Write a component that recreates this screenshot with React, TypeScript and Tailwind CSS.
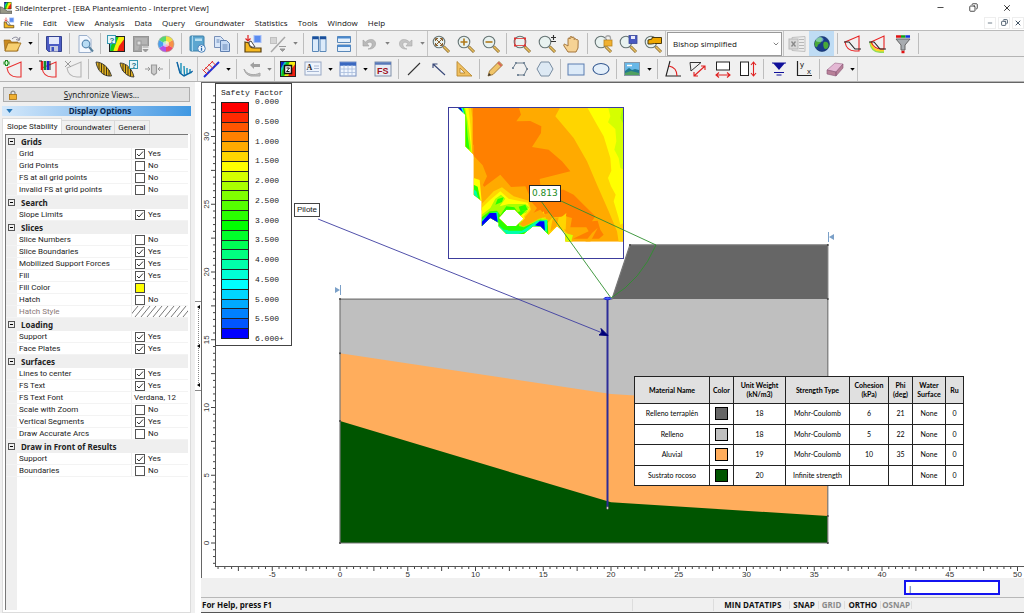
import React, { useState } from 'react';
import { Minus, X, Copy, ChevronDown } from 'lucide-react';

type Row =
  | { kind: 'group'; label: string }
  | { kind: 'check'; label: string; checked: boolean }
  | { kind: 'color'; label: string }
  | { kind: 'hatch'; label: string }
  | { kind: 'text'; label: string; value: string };

const rows: Row[] = [
  { kind: 'group', label: 'Grids' },
  { kind: 'check', label: 'Grid', checked: true },
  { kind: 'check', label: 'Grid Points', checked: false },
  { kind: 'check', label: 'FS at all grid points', checked: false },
  { kind: 'check', label: 'Invalid FS at grid points', checked: false },
  { kind: 'group', label: 'Search' },
  { kind: 'check', label: 'Slope Limits', checked: true },
  { kind: 'group', label: 'Slices' },
  { kind: 'check', label: 'Slice Numbers', checked: false },
  { kind: 'check', label: 'Slice Boundaries', checked: true },
  { kind: 'check', label: 'Mobilized Support Forces', checked: true },
  { kind: 'check', label: 'Fill', checked: true },
  { kind: 'color', label: 'Fill Color' },
  { kind: 'check', label: 'Hatch', checked: false },
  { kind: 'hatch', label: 'Hatch Style' },
  { kind: 'group', label: 'Loading' },
  { kind: 'check', label: 'Support', checked: true },
  { kind: 'check', label: 'Face Plates', checked: true },
  { kind: 'group', label: 'Surfaces' },
  { kind: 'check', label: 'Lines to center', checked: true },
  { kind: 'check', label: 'FS Text', checked: true },
  { kind: 'text', label: 'FS Text Font', value: 'Verdana, 12' },
  { kind: 'check', label: 'Scale with Zoom', checked: false },
  { kind: 'check', label: 'Vertical Segments', checked: true },
  { kind: 'check', label: 'Draw Accurate Arcs', checked: false },
  { kind: 'group', label: 'Draw in Front of Results' },
  { kind: 'check', label: 'Support', checked: true },
  { kind: 'check', label: 'Boundaries', checked: false },
];

const menus = ['File', 'Edit', 'View', 'Analysis', 'Data', 'Query', 'Groundwater', 'Statistics', 'Tools', 'Window', 'Help'];

const scaleColors = [
  '#ff0000', '#ff2a00', '#ff5500', '#ff8000', '#ffaa00', '#ffd500', '#ffff00', '#d5ff00',
  '#aaff00', '#80ff00', '#55ff00', '#2aff00', '#00ff00', '#00ff2a', '#00ff55', '#00ff80',
  '#00ffaa', '#00ffd5', '#00ffff', '#00d5ff', '#00aaff', '#0080ff', '#0055ff', '#0000ff',
];
const scaleLabels = ['0.000', '0.500', '1.000', '1.500', '2.000', '2.500', '3.000', '3.500', '4.000', '4.500', '5.000', '5.500', '6.000+'];

const materials = [
  { name: 'Relleno terraplén', color: '#666666', weight: 18, type: 'Mohr-Coulomb', c: '6', phi: '21' },
  { name: 'Relleno', color: '#bfbfbf', weight: 18, type: 'Mohr-Coulomb', c: '5', phi: '22' },
  { name: 'Aluvial', color: '#ffad5c', weight: 19, type: 'Mohr-Coulomb', c: '10', phi: '35' },
  { name: 'Sustrato rocoso', color: '#005500', weight: 20, type: 'Infinite strength', c: '', phi: '' },
];

// metres -> pixels inside the drawing area
const SCALE = 13.55;
const px = (u: number) => 125 + u * SCALE;
const py = (u: number) => 460 - u * SCALE;
const pts = (list: number[][]) => list.map(([a, b]) => `${px(a)},${py(b)}`).join(' ');

/* ---------- icons ---------- */

function Lens({ children }: { children?: React.ReactNode }) {
  return (
    <>
      <path d="M12.5 12.5l5.5 5.5" stroke="#8a6a30" strokeWidth="3" />
      <path d="M12.8 12.8l5 5" stroke="#e8c060" strokeWidth="1.6" />
      <circle cx="8" cy="8" r="5.8" fill="#e8f2f0" stroke="#667474" strokeWidth="1.1" />
      {children}
    </>
  );
}

function Contour({ x = 2, y = 2, s = 16 }: { x?: number; y?: number; s?: number }) {
  return (
    <svg x={x} y={y} width={s} height={s} viewBox="0 0 16 16">
      <rect width="16" height="16" fill="#0a22c8" />
      <path d="M5 0h11v16H0V9z" fill="#12c8c0" />
      <path d="M7 0h9v16H1l1-6z" fill="#18c818" />
      <path d="M10 0h6v16H4l2-6z" fill="#f6ee10" />
      <path d="M16 2v14H8l2-6z" fill="#ee2010" />
      <rect x=".5" y=".5" width="15" height="15" fill="none" stroke="#222" />
    </svg>
  );
}

const excavation = (
  <>
    <path d="M2 8l4 1c0 4 2 5 5 5h7v4H2z" fill="#f5b820" stroke="#5a4010" strokeWidth="1.2" />
    <path d="M6 8c0 4 3 6 6 5L8 7z" fill="#fff" stroke="#444" />
    <rect x="11" y="1.5" width="7" height="7" fill="#5b8cf0" stroke="#a8c0f8" />
    <path d="M5 1v6M2.5 4.5L5 7l2.5-2.5" stroke="#e02020" fill="none" strokeWidth="1.2" />
  </>
);

const icons: Record<string, React.ReactNode> = {
  open: (
    <>
      <path d="M1 6h6l1.5 2H15v9H2z" fill="#c98a20" stroke="#8a5a10" strokeWidth=".6" />
      <path d="M5 9h13l-4 8H2z" fill="#f8d070" stroke="#9a6a18" strokeWidth=".8" />
      <path d="M9 5c3-3 6-2 7 1m1-3l-.8 3.500L13 5.5" stroke="#889" fill="none" />
    </>
  ),
  save: (
    <>
      <path d="M2.5 2.5h15v15h-13l-2-2z" fill="#4c5cc4" stroke="#34428f" />
      <rect x="5" y="3" width="10" height="7" fill="#e4e8fa" />
      <rect x="6" y="12" width="8" height="5.5" fill="#c8cce0" />
      <rect x="7.5" y="13" width="2.5" height="4" fill="#3c50c0" />
    </>
  ),
  preview: (
    <>
      <path d="M4 1.5h8l4 4v13H4z" fill="#f4f8fe" stroke="#9cb0cc" />
      <circle cx="11" cy="10" r="3.8" fill="#b8dcf4" stroke="#5888b0" strokeWidth="1.2" />
      <path d="M14 13l4 4.5" stroke="#58809c" strokeWidth="2" />
    </>
  ),
  contourQuery: (
    <>
      <Contour x={3} y={2} s={16} />
      <rect x="1.5" y="1.5" width="8" height="8" fill="#e8f6fa" stroke="#3898b0" />
      <text x="3.5" y="8.5" fontSize="8" fontWeight="bold" fill="#187088" fontFamily="Liberation Sans">?</text>
    </>
  ),
  contourGray: (
    <>
      <rect x="2.5" y="2.5" width="15" height="15" fill="#a4a4a4" stroke="#949494" />
      <path d="M4 4h12v6H9l-2 6H4z" fill="#b4b4b4" />
      <rect x="6" y="7" width="4" height="4" fill="#ddd" stroke="#999" />
      <path d="M11 12h8v7h-8z" fill="#eee" />
      <path d="M11.5 13h6M12 15.5h5l-2.5 2.5z" fill="#999" stroke="#999" />
    </>
  ),
  wheel: (
    <>
      <path d="M10 10V2a8 8 0 0 1 7 4z" fill="#f0e040" />
      <path d="M10 10l7-4a8 8 0 0 1 0 8z" fill="#f89048" />
      <path d="M10 10l7 4a8 8 0 0 1-7 4z" fill="#f04868" />
      <path d="M10 10v8a8 8 0 0 1-7-4z" fill="#b050e8" />
      <path d="M10 10l-7 4a8 8 0 0 1 0-8z" fill="#48a0f0" />
      <path d="M10 10L3 6a8 8 0 0 1 7-4z" fill="#58d870" />
      <circle cx="10" cy="10" r="3" fill="#fff" opacity=".6" />
      <circle cx="10" cy="10" r="8" fill="none" stroke="#aaa" strokeWidth=".6" />
    </>
  ),
  book: (
    <>
      <rect x="3" y="2" width="14" height="15" rx="1" fill="#5ca6d0" stroke="#3c80a8" />
      <path d="M5.5 2v15" stroke="#a8d8f0" />
      <rect x="8" y="4.5" width="7" height="2.5" fill="#b8dff0" />
      <circle cx="14.5" cy="14.5" r="3.8" fill="#f0f8ff" stroke="#4880b8" />
      <path d="M14.5 13.8v3M14.5 12v1" stroke="#2060a8" strokeWidth="1.3" />
    </>
  ),
  copy: (
    <>
      <path d="M2.5 2.5h6l3 3v8h-9z" fill="#d8e6f8" stroke="#7890b8" />
      <path d="M8.5 6.5h6l3 3v8h-9z" fill="#c4d8f4" stroke="#6080b0" />
      <path d="M10.5 11h5M10.5 13h5M10.5 15h5M4.5 6h3M4.5 8h3" stroke="#6888b8" />
    </>
  ),
  excavation,
  ratio: (
    <>
      <path d="M3 18L17 3" stroke="#a8a8a8" strokeWidth="1.5" />
      <rect x="2.5" y="3.5" width="6" height="6" fill="#d4d4d4" stroke="#c0c0c0" />
      <path d="M11 12.5h7M12 15h5l-2.5 2.5z" fill="#999" stroke="#999" />
    </>
  ),
  tileV: (
    <>
      <path d="M3.5 2.5h6v15h-6zM11 2.5h6v15h-6z" fill="#dcebfa" stroke="#5a88b8" />
      <path d="M3.5 4h6M11 4h6" stroke="#1c4f9c" strokeWidth="2.5" />
    </>
  ),
  tileH: (
    <>
      <path d="M3.5 2.5h13v6h-13zM3.5 11h13v6.5h-13z" fill="#e4f0fc" stroke="#5a88b8" />
      <path d="M3.5 3.5h13M3.5 12h13" stroke="#4a88cc" strokeWidth="2" />
    </>
  ),
  undo: <path d="M3 6v6h6l-2-2.5c3-2.5 6-1 5 2-.5 2-2 3-4 3.5 5 .5 8-2.5 7.500-6C15 5 9.500 4 5.500 8z" fill="#bababa" stroke="#a0a0a0" strokeWidth=".6" />,
  redo: <path d="M17 6v6h-6l2-2.5c-3-2.5-6-1-5 2 .5 2 2 3 4 3.5-5 .5-8-2.5-7.500-6C5 5 10.500 4 14.500 8z" fill="#c4c4c4" stroke="#a8a8a8" strokeWidth=".6" />,
  zoomAll: (
    <Lens>
      <path d="M5 5l6 6M11 5l-6 6M4.5 7V4.5H7M9 4.5h2.5V7M4.5 9v2.5H7M9 11.5h2.5V9" stroke="#8a6030" fill="none" />
    </Lens>
  ),
  zoomIn: <Lens><path d="M8 4.5v7M4.5 8h7" stroke="#b07818" strokeWidth="1.6" /></Lens>,
  zoomOut: <Lens><path d="M4.5 8h7" stroke="#b07818" strokeWidth="1.6" /></Lens>,
  zoomWindow: (
    <Lens>
      <rect x="3" y="4.5" width="10" height="7" fill="none" stroke="#e03030" strokeWidth=".8" />
      <path d="M2 3.5h2v2H2zM12 3.5h2v2h-2zM2 10.5h2v2H2zM12 10.5h2v2h-2z" fill="#e03030" />
    </Lens>
  ),
  zoomPM: <Lens><path d="M16.5 1v5M14 3.5h5M14 7.5h5" stroke="#333" strokeWidth="1.1" /></Lens>,
  pan: (
    <path
      d="M6 18l-4-6c-1-1.500.5-2.500 1.500-1.500L6 12V5c0-1.500 2-1.500 2 0V3.500c0-1.500 2-1.500 2 0V4c0-1.500 2-1.500 2.200 0v1.500c0-1.200 2-1.200 2 .3 1-.8 2 0 2 1L16 14l-2 4z"
      fill="#f6d294"
      stroke="#9a6a30"
      strokeWidth=".9"
    />
  ),
  zoomLock: (
    <Lens>
      <rect x="11" y="6" width="8" height="6" fill="#f0b030" stroke="#b88420" strokeWidth=".8" />
      <path d="M12.5 6V4c0-3 5-3 5 0v2" fill="none" stroke="#a8a8a8" strokeWidth="1.3" />
    </Lens>
  ),
  zoomSave: (
    <Lens>
      <rect x="11" y="1.5" width="8" height="8" fill="#4858c0" stroke="#384898" strokeWidth=".8" />
      <path d="M13 2h4v3h-4z" fill="#e8e8fa" />
    </Lens>
  ),
  zoomShape: <Lens><path d="M5 10V6l4-1V3.5h9.500v6h-7L8 10z" fill="#f0a800" stroke="#4a3a10" /></Lens>,
  excel: (
    <>
      <path d="M5 3.5l13-1v15l-13-1z" fill="#ececec" stroke="#c0c0c0" />
      <path d="M12 5.5h5M12 8.5h5M12 11.5h5M12 14.5h5" stroke="#b8b8b8" />
      <rect x="2" y="5" width="9" height="10" fill="#d8d8d8" stroke="#b8b8b8" />
      <path d="M4.5 7.5l4 5M8.5 7.5l-4 5" stroke="#888" strokeWidth="1.3" />
    </>
  ),
  globe: (
    <>
      <circle cx="10" cy="10" r="7.5" fill="#1a3c88" stroke="#123060" strokeWidth=".6" />
      <path d="M6 4c3-2 5 0 4 2s-1 3-3 4-1 4-3 3-2-6 2-9zM12 8c3-1 5 1 4.500 4S13 16 12 14s-1-5 0-6z" fill="#48a838" />
      <ellipse cx="7.5" cy="5.5" rx="4" ry="2.5" fill="#b8f0ff" opacity=".5" />
    </>
  ),
  surfaceMin: (
    <>
      <path d="M2 8l14-6v15h-4C7 17 3 14 2 8z" fill="none" stroke="#e82020" strokeWidth="1.1" />
      <path d="M1 8h5l6 7h6" fill="none" stroke="#222" strokeWidth="1.1" />
    </>
  ),
  surfaceAll: (
    <>
      <path d="M2 8c1 7 5 10 10 10h4" fill="none" stroke="#8fdc60" strokeWidth="1.8" />
      <path d="M3 8c1 6 4 8.500 9 8.500h4" fill="none" stroke="#f8d820" strokeWidth="1.800" />
      <path d="M3 8l13-6v13h-3C8 15 5 12 3 8z" fill="none" stroke="#e82020" strokeWidth="1.1" />
      <path d="M1 8h5l6 7h6" fill="none" stroke="#222" strokeWidth="1.1" />
    </>
  ),
  filter: (
    <>
      <path d="M3 2.5h5" stroke="#e01010" strokeWidth="2.5" />
      <path d="M8 2.5h4.5" stroke="#10a010" strokeWidth="2.5" />
      <path d="M12.5 2.5h4.5" stroke="#1030e0" strokeWidth="2.5" />
      <path d="M3 5h14l-5 6v5H8v-5z" fill="#a8acb0" stroke="#666" />
      <path d="M8.500 18h3" stroke="#e01010" strokeWidth="2.5" />
    </>
  ),
  surfaceAdd: (
    <>
      <path d="M4 9l14-6v15h-4C9 18 5 15 4 9z" fill="none" stroke="#e83030" strokeWidth="1.1" />
      <path d="M3.5 1v6M.5 4h6" stroke="#208a20" strokeWidth="3" />
      <path d="M3.5 2v4M1.5 4h4" stroke="#d8ffd8" />
    </>
  ),
  surfaceBars: (
    <>
      <path d="M4 9l14-6v15h-4C9 18 5 15 4 9z" fill="none" stroke="#e83030" strokeWidth="1.1" />
      <path d="M4 2v9" stroke="#e02020" strokeWidth="2.5" />
      <path d="M7 2v9" stroke="#108a30" strokeWidth="2.5" />
      <path d="M10 2v9" stroke="#2020c8" strokeWidth="2.5" />
      <path d="M1 2h3M12 2v9" stroke="#222" />
    </>
  ),
  surfaceOff: (
    <>
      <path d="M4 9l14-6v15h-4C9 18 5 15 4 9z" fill="none" stroke="#b4b4b4" strokeWidth="1.1" />
      <path d="M2 2l6 6M8 2L2 8" stroke="#999" />
    </>
  ),
  slice: (
    <>
      <path d="M2 3c6 0 13 5 15.5 14C9 18 3 11 2 3z" fill="#e0b020" stroke="#333" strokeWidth=".9" />
      <path d="M5 3.5v7M7.5 4.5v9M10 6v10M12.5 8v9M15 11v6" stroke="#332a10" strokeWidth=".9" />
    </>
  ),
  sliceQuery: (
    <>
      <path d="M1 4c6 0 12 5 14 14C8 18 2 12 1 4z" fill="#e0b020" stroke="#333" strokeWidth=".9" />
      <path d="M4 5v7M6.5 6v8M9 8v8M11.5 10v7" stroke="#332a10" strokeWidth=".9" />
      <rect x="10.5" y="1.5" width="8" height="8" fill="#e8f6fa" stroke="#3898b0" />
      <text x="12.5" y="8.5" fontSize="8" fontWeight="bold" fill="#187088" fontFamily="Liberation Sans">?</text>
    </>
  ),
  sliceForces: (
    <>
      <path d="M7.500 6h5v8l-2.500 2-2.500-2z" fill="#ccc" stroke="#999" strokeWidth="1.2" />
      <path d="M1 10h5M4 8l2 2-2 2M19 10h-5M16 8l-2 2 2 2" fill="none" stroke="#999" />
    </>
  ),
  fan: (
    <>
      <path d="M2 3l3 11 4 3 8-4M6 4v11M9 7l.5 10M12 9v7M15 10v4" fill="none" stroke="#1890b8" strokeWidth="1.4" />
      <path d="M2 3l3 11 4 3 9-5" fill="none" stroke="#1858a0" />
    </>
  ),
  pile: (
    <>
      <path d="M3 18L18 3" stroke="#2030d8" strokeWidth="2" />
      <path d="M2 12L12 2M1.500 10.500l5 5M4.500 8l4.500 4.500M7.500 5l4.500 4.500M11 2.500l4 4" stroke="#e03030" strokeWidth="1" />
    </>
  ),
  bounce: (
    <>
      <path d="M2 10c3 6 10 7 16 4v3H9c-4-1-6-3-7-7z" fill="#c0c0c0" stroke="#a8a8a8" />
      <path d="M8 6l4-3v2h6v3h-6v2z" fill="#a0a0a0" />
    </>
  ),
  contourBox: (
    <>
      <Contour x={2} y={2} s={16} />
      <rect x="6.5" y="6.5" width="7" height="8" fill="#fff" stroke="#111" strokeWidth="1.5" />
      <path d="M8.5 9h3l-3 3.5h3" stroke="#111" fill="none" />
    </>
  ),
  textBox: (
    <>
      <rect x="2" y="3" width="16" height="13" fill="#eef4fc" stroke="#98a8c4" />
      <text x="3.5" y="10.5" fontSize="8" fontWeight="bold" fill="#222" fontFamily="Liberation Serif">A</text>
      <path d="M11 7h5M11 9.5h5M4 12.5h12" stroke="#a8b8d4" />
    </>
  ),
  grid: (
    <>
      <rect x="2" y="3" width="16" height="14" fill="#f0f6fe" stroke="#7890c0" />
      <path d="M2 5h16" stroke="#3a68c0" strokeWidth="3.5" />
      <path d="M2 10h16M2 13.5h16M6 6v11M10 6v11M14 6v11" stroke="#a8bcdc" strokeWidth=".8" />
    </>
  ),
  fs: (
    <>
      <rect x="2" y="3" width="16" height="14" fill="#e8ecf4" stroke="#8090a8" />
      <path d="M2 4.5h16" stroke="#5878b8" strokeWidth="2.5" />
      <text x="4" y="15" fontSize="9" fontWeight="bold" fill="#a01020" fontFamily="Liberation Sans">FS</text>
    </>
  ),
  line: <path d="M4 16L16 4" stroke="#333" strokeWidth="1.1" />,
  arrow: <path d="M16 16L4 5M4 9V5h4.500" stroke="#384878" strokeWidth="1.1" fill="none" />,
  triangle: <path d="M3 2.5L18 17H3zM6 9v5h5z" fill="#f0c060" fillRule="evenodd" stroke="#b88830" strokeWidth=".9" />,
  pencil: (
    <>
      <path d="M3 17l1.5-5L14 2.5l3.5 3.5L8 15.5z" fill="#f0c468" stroke="#9a7030" strokeWidth=".9" />
      <path d="M3 17l1-3 2 2z" fill="#333" />
      <path d="M13 3.5l3.5 3.5" stroke="#d86858" strokeWidth="2" />
    </>
  ),
  polyline: (
    <>
      <path d="M3 9l3-5h8l3 6-3 6H8" fill="none" stroke="#6a7c8c" />
      <path d="M2 8h2v2H2zM5 3h2v2H5zM13 3h2v2h-2zM16 9h2v2h-2zM13 15h2v2h-2zM7 15h2v2H7z" fill="#789" />
    </>
  ),
  polygon: <path d="M6 3h8l4 7-4 7H6l-4-7z" fill="#dde9f4" stroke="#788ca0" />,
  rect: <rect x="2" y="5" width="16" height="11" fill="#dceaf8" stroke="#5a7cb0" />,
  ellipse: <ellipse cx="10" cy="10" rx="8" ry="5.5" fill="#e4effa" stroke="#345890" strokeWidth="1.1" />,
  image: (
    <>
      <rect x="2.5" y="3.5" width="15" height="13" fill="#68b8e8" stroke="#8898a8" />
      <path d="M3 12l4-3 3 2 3-1 4 1v5H3z" fill="#207890" />
      <path d="M3 14l6-2 8 2v2H3z" fill="#50a060" />
      <path d="M5 6.5h5" stroke="#fff" strokeWidth="1.5" />
    </>
  ),
  angle: (
    <>
      <path d="M7 2L3 17h15" fill="none" stroke="#222" strokeWidth="1.1" />
      <path d="M6 7c5 1 8 4 8 10" fill="none" stroke="#e02020" strokeWidth="1.1" />
    </>
  ),
  dimDiag: (
    <>
      <path d="M2 3.5h11L3 12z" fill="none" stroke="#333" />
      <path d="M6 17L17 7M6 13v4h4M13 7h4v4" fill="none" stroke="#e02020" strokeWidth="1.1" />
    </>
  ),
  dimH: (
    <>
      <rect x="3.5" y="3" width="13" height="8" fill="#fff" stroke="#222" />
      <path d="M3 16h14M6 13.5L3 16l3 2.5M14 13.5l3 2.5-3 2.5" fill="none" stroke="#e02020" strokeWidth="1.1" />
    </>
  ),
  dimV: (
    <>
      <rect x="2.5" y="3" width="8" height="13.5" fill="#fff" stroke="#222" />
      <path d="M15.5 3v14M13 6l2.5-3L18 6M13 14l2.5 3 2.5-3" fill="none" stroke="#e02020" strokeWidth="1.1" />
    </>
  ),
  water: (
    <>
      <path d="M4 4h12l-6 7z" fill="#10109a" />
      <path d="M3 4h14M5 13.5h10M7.5 16h5" stroke="#10109a" strokeWidth="1.2" />
    </>
  ),
  axes: (
    <>
      <path d="M3.5 2v14.5H18" fill="none" stroke="#222" strokeWidth="1.2" />
      <text x="6" y="8" fontSize="8" fill="#222" fontFamily="Liberation Sans">y</text>
      <text x="13" y="14.5" fontSize="8" fill="#222" fontFamily="Liberation Sans">x</text>
    </>
  ),
  eraser: (
    <>
      <path d="M2 11l8-7 8 1-7 8z" fill="#e4b8d4" stroke="#9a6888" strokeWidth=".6" />
      <path d="M2 11l9 2v4l-9-2zM11 13l7-8v4l-7 8z" fill="#b88098" stroke="#8a5878" strokeWidth=".6" />
    </>
  ),
};

function Icon({ name }: { name: string }) {
  return (
    <svg viewBox="0 0 20 20" className="size-5" aria-hidden="true">
      {icons[name]}
    </svg>
  );
}

// "|" is a group separator, "/" the edge of a docked bar, "v" and "w" drop-down arrows (w is greyed)
const bar1a = ['open', 'v', '|', 'save', '|', 'preview', '|', 'contourQuery', 'contourGray', 'wheel', '|', 'book', 'copy', '|', 'excavation', 'ratio', 'w', '|', 'tileV', 'tileH', '/', 'undo', 'w', 'redo', 'w', '/', 'zoomAll', 'zoomIn', 'zoomOut', '|', 'zoomWindow', 'zoomPM', 'pan', '|', 'zoomLock', 'zoomSave', 'zoomShape', '/'];
const bar1b = ['/', 'excel', 'globe', '|', 'surfaceMin', 'surfaceAll', 'filter', '|'];
const bar2 = ['surfaceAdd', 'v', 'surfaceBars', 'surfaceOff', '|', 'slice', 'sliceQuery', 'sliceForces', '|', 'fan', '/', 'pile', 'v', '|', 'bounce', 'w', '/', 'contourBox', 'textBox', 'v', 'grid', 'v', 'fs', '|', 'line', 'arrow', 'triangle', '|', 'pencil', 'polyline', 'polygon', '|', 'rect', 'ellipse', '|', 'image', 'v', '|', 'angle', 'dimDiag', 'dimH', 'dimV', '|', 'water', 'axes', '|', 'eraser', 'v', '/'];

function Bar({ items }: { items: string[] }) {
  return (
    <>
      {items.map((item, i) => {
        if (item === '|') {
          return <span key={i} className="flex w-1.5 shrink-0 justify-center self-stretch py-0.5"><span className="w-px bg-[#bdbdbd]" /></span>;
        }
        if (item === '/') return <span key={i} className="w-px shrink-0 self-stretch bg-[#c4c4c4]" />;
        if (item === 'v' || item === 'w') {
          return (
            <button key={i} aria-label="More" className="flex w-2.5 shrink-0 justify-center">
              <svg viewBox="0 0 6 4" className={item === 'v' ? 'h-[3px] w-[5px] fill-black' : 'h-[3px] w-[5px] fill-[#808080]'}>
                <path d="M0 0h6L3 3.5z" />
              </svg>
            </button>
          );
        }
        return (
          <button
            key={i}
            aria-label={item}
            className={`flex w-[25px] shrink-0 items-center justify-center self-stretch ${item === 'globe' ? 'bg-[#bfdcf4]' : ''}`}
          >
            <Icon name={item} />
          </button>
        );
      })}
    </>
  );
}

/* ---------- side panel ---------- */

function PropertyRow({ row, id }: { row: Row; id: string }) {
  const [on, setOn] = useState(row.kind === 'check' ? row.checked : false);

  if (row.kind === 'group') {
    return (
      <div className="flex h-[13px] items-center bg-[#efefef] font-['Noto_Sans',sans-serif] font-bold">
        <button aria-label={`Collapse ${row.label}`} className="ml-0.5 mr-1.5 flex size-[7px] items-center justify-center border border-[#555]">
          <span className="h-px w-[3px] bg-black" />
        </button>
        {row.label}
      </div>
    );
  }

  return (
    <div className="flex h-3 items-stretch border-b border-[#f3f3f3] pl-[11px]">
      <label htmlFor={id} className={`flex w-[115px] items-center border-r border-[#efefef] bg-white pl-0.5 ${row.kind === 'hatch' ? 'text-[#8a7878]' : ''}`}>
        {row.label}
      </label>
      <div className="flex flex-1 items-center bg-white">
        {row.kind === 'check' && (
          <>
            <span className="relative ml-[3px] flex">
              <input
                id={id}
                type="checkbox"
                checked={on}
                onChange={(e) => setOn(e.target.checked)}
                className="peer size-2.5 appearance-none border border-[#555] bg-white"
              />
              <svg viewBox="0 0 10 10" className="pointer-events-none absolute inset-0 hidden size-2.5 peer-checked:block">
                <path d="M2 5l2 2 4-4.5" fill="none" stroke="#333" />
              </svg>
            </span>
            <span className="ml-[3px]">{on ? 'Yes' : 'No'}</span>
          </>
        )}
        {row.kind === 'color' && <button id={id} aria-label="Fill Color" className="ml-[3px] size-2.5 border border-[#444] bg-[#ffff00]" />}
        {row.kind === 'text' && <span id={id} className="ml-0.5">{row.value}</span>}
        {row.kind === 'hatch' && (
          <svg id={id} className="h-full w-full">
            {Array.from({ length: 10 }, (_, i) => (
              <path key={i} d={`M${i * 6 - 3} 11l9-11`} stroke="#555" strokeWidth=".8" />
            ))}
          </svg>
        )}
      </div>
    </div>
  );
}

function SidePanel() {
  const [tab, setTab] = useState('Slope Stability');
  return (
    <aside className="flex w-[195px] shrink-0 flex-col pl-0.5 pr-1 pt-[5px] font-['Roboto','Noto_Sans',sans-serif] text-[8px] leading-none text-[#222]">
      <button className="mx-px flex h-[15px] shrink-0 items-center border border-[#adadad] bg-[#e1e1e1] px-1 font-['Noto_Sans',sans-serif]">
        <svg viewBox="0 0 10 10" className="size-2.5">
          <path d="M3 5V3c0-2.5 4-2.5 4 0v2" fill="none" stroke="#888" strokeWidth="1.2" />
          <rect x="1.5" y="4.5" width="7" height="5" fill="#f0b030" stroke="#a87010" strokeWidth=".8" />
        </svg>
        <span className="flex-1"><u>S</u>ynchronize Views...</span>
      </button>
      <div className="mt-1 flex h-2.5 shrink-0 items-center bg-gradient-to-r from-[#d4e8fa] to-[#3f98e2] px-1 font-['Noto_Sans',sans-serif]">
        <svg viewBox="0 0 8 5" className="h-1 w-[7px]"><path d="M0 0h8L4 5z" fill="#2878b8" /></svg>
        <span className="flex-1 text-center font-bold text-[#0a2850]">Display Options</span>
      </div>
      <div role="tablist" className="mt-0.5 flex h-4 shrink-0 items-end">
        {['Slope Stability', 'Groundwater', 'General'].map((name) => (
          <button
            key={name}
            role="tab"
            aria-selected={tab === name}
            onClick={() => setTab(name)}
            className={tab === name ? 'h-4 border border-b-0 border-[#dcdcdc] bg-white px-1' : 'h-3.5 border border-b-0 border-l-0 border-[#d9d9d9] bg-[#f0f0f0] px-[3px]'}
          >
            {name}
          </button>
        ))}
      </div>
      <div className="flex-1 border border-t-0 border-[#dcdcdc] bg-white px-0.5 pb-0.5">
        <div className="h-full border-l border-t border-[#777] bg-[linear-gradient(to_right,#efefef_11px,#fff_11px)]">
          {rows.map((row, i) => (
            <PropertyRow key={i} row={row} id={`prop-${i}`} />
          ))}
        </div>
      </div>
    </aside>
  );
}

/* ---------- drawing ---------- */

function tickLength(k: number, long: number) {
  if (k % 10 === 0) return long;
  return k % 5 === 0 ? 4 : 2;
}

function VerticalRuler() {
  const ticks = Array.from({ length: 70 }, (_, i) => i - 3);
  return (
    <svg className="h-full w-[13px] shrink-0 bg-white">
      {ticks.map((k) => {
        const y = py(k / 2);
        return (
          <g key={k}>
            <path d={`M13 ${y}h-${tickLength(k, 4)}`} stroke="#444" />
            {k % 10 === 0 && (
              <text transform={`translate(7 ${y}) rotate(-90)`} textAnchor="middle" fontSize="8" fill="#333">{k / 2}</text>
            )}
          </g>
        );
      })}
    </svg>
  );
}

function HorizontalRuler() {
  const ticks = Array.from({ length: 119 }, (_, i) => i - 18);
  return (
    <svg className="h-3 w-full shrink-0 bg-white">
      <path d="M13 .5h4000" stroke="#555" />
      {ticks.map((k) => {
        const x = px(k / 2) + 13;
        return (
          <g key={k}>
            <path d={`M${x} 1v${tickLength(k, 4)}`} stroke="#444" />
            {k % 10 === 0 && (
              <text x={x} y="11" textAnchor="middle" fontSize="8" fill="#333">{k / 2}</text>
            )}
          </g>
        );
      })}
    </svg>
  );
}

// contours of the slip-centre grid
function SafetyMap() {
  return (
    <svg x="234" y="24" width="175" height="151" viewBox="26 37 525 453">
      <clipPath id="grid-area">
        <path
          clipRule="evenodd"
          d="M50 37H551V441H375V415L350 395L325 420L300 395H278L250 418H198L175 395V384L150 370L124 395V320L100 300V180L75 155V60zM198 345H224L250 372L228 394H200L175 370z"
        />
      </clipPath>
      <g clipPath="url(#grid-area)">
        <rect x="26" y="37" width="525" height="453" fill="#ffaa00" />
        <path d="M97 37H235L242 60L228 80L270 79L303 95L302 115L275 157L325 165L365 200L390 230L298 253L302 285H370L400 300L430 330L465 365L455 380L472 378L480 405L490 420L476 432H398L445 410L438 398H390L395 370L375 365L340 368L325 355L275 372L248 395V380L262 350L270 310L255 275L212 277L180 240L122 284L140 245L127 212L97 180z" fill="#ff8000" />
        <path d="M472 400L450 441H435L455 415z" fill="#ffaa00" />
        <path d="M360 37H551V441H535L530 410L505 350L470 270L440 200L400 130L345 65z" fill="#ffd500" />
        <path d="M440 37H551V385L540 390L535 370L520 320L526 300L512 275L503 250L513 228L510 190L490 125L470 90z" fill="#ffff00" />
        <path d="M503 37H551V225L540 220L535 190L522 165L528 140L525 103L503 83L510 65z" fill="#d5ff00" />
        <path d="M545 45L551 40V92L540 70z" fill="#aaff00" />

        <path d="M75 37H97V182L108 215L122 240V262L140 290L180 265L215 300L262 310L290 340L275 362L250 385H175L100 330V150L75 158z" fill="#ffaa00" />
        <path d="M68 37H92L96 70V178L75 160z" fill="#ffd500" />
        <path d="M60 37H84L90 90L95 178L75 160z" fill="#ffff00" />
        <path d="M54 37H74L82 80L90 140L94 176H72z" fill="#aaff00" />
        <path d="M48 37H70L77 65L82 125L88 165L75 160V62z" fill="#2aff00" />
        <path d="M48 37H66L73 62z" fill="#00ffff" />
        <path d="M48 37H61L68 54z" fill="#0000ff" />
        <path d="M100 250L118 256L124 320L100 302z" fill="#ffff00" />
        <path d="M100 270L112 276L120 315L100 302z" fill="#2aff00" />
        <path d="M100 284L108 290L114 312L100 300z" fill="#00ffaa" />

        <path d="M124 328L160 290L185 278L220 305L265 318L272 345L250 372L285 372L310 350L325 400L378 355L372 405L398 441H320L260 425H180L124 395z" fill="#ffd500" />
        <path d="M124 340L150 315L180 290L205 312L262 324L268 342L250 365L262 385L305 362L322 400L325 420H170L124 395z" fill="#ffff00" />
        <path d="M124 360L150 340L165 312L182 300L195 312L178 335L205 328L255 328L266 338L258 354L235 362L252 390L300 370L322 374V420H170L124 400z" fill="#aaff00" />
        <path d="M124 368L148 350L170 348L180 362L198 335L222 338L232 352L258 345L240 365L236 394L250 398L300 375L322 378L325 420H170L124 400z" fill="#2aff00" />
        <path d="M165 330L172 313L190 308L185 322zM235 336L255 330L262 345L240 350z" fill="#2aff00" />
        <path d="M124 376L150 355L172 352L174 390L190 405H250L290 378L320 376V412L300 400L255 412L210 425L170 400L150 380L124 400z" fill="#00ffaa" />
        <path d="M185 398L205 408H245L268 394L250 405L230 398H200z" fill="#2aff00" />
        <path d="M124 382L148 355H168L173 388L152 372L124 400zM284 392L298 380H312L314 410L300 396z" fill="#0000ff" />
        <path d="M238 388L262 362L300 345L318 366L296 372L262 390L248 396z" fill="#ffaa00" />
        <path d="M322 385L335 370L378 365L376 405L350 394L325 420z" fill="#ffd500" />
        <path d="M337 372L355 368L350 394L330 410z" fill="#ffaa00" />
        <path d="M375 415L398 422L392 441H375z" fill="#d5ff00" />
      </g>
    </svg>
  );
}

function Scene() {
  return (
    <svg className="absolute inset-0 h-full w-full">
      <path d="M.5 0v4000" stroke="#555" />
      <SafetyMap />
      <rect x="233.5" y="24.5" width="175" height="151" fill="none" stroke="#3c3c9c" />

      <polygon points={pts([[0, 18], [36, 18], [36, 0], [0, 0]])} fill="#bfbfbf" />
      <polygon points={pts([[20.07, 18], [21.4, 22], [36, 22], [36, 18]])} fill="#666666" />
      <polygon points={pts([[0, 14], [20, 11], [36, 10], [36, 0], [0, 0]])} fill="#ffad5c" />
      <polygon points={pts([[0, 9], [20, 3], [36, 2], [36, 0], [0, 0]])} fill="#005500" />
      <polygon points={pts([[0, 18], [20.07, 18], [21.4, 22], [36, 22], [36, 0], [0, 0]])} fill="none" stroke="#777" strokeWidth="1.2" />
      {[[0, 18], [0, 14], [0, 9], [0, 0], [36, 0], [36, 2], [36, 18], [36, 22], [21.4, 22]].map(([a, b], i) => (
        <circle key={i} cx={px(a)} cy={py(b)} r="1" fill="#444" />
      ))}

      {/* critical surface */}
      <path d="M326 118L396 215M346 118L441 162M396 215Q426 197 441 162" fill="none" stroke="#2f8f2f" strokeWidth=".9" />

      {/* slope limits */}
      <path d="M125.5 202v10M613.5 149v10" stroke="#7ba0c8" />
      <path d="M120 204v6l5-3zM619 151v6l-5-3z" fill="#7ba0c8" />

      {/* pile and its callout */}
      <path d="M392.5 215v209" stroke="#2c2c98" strokeWidth="2" />
      <ellipse cx="392.5" cy="215.5" rx="3.5" ry="1.2" fill="#4060ff" stroke="#2c2cd0" />
      <circle cx="392.5" cy="425" r="1.2" fill="#fff" stroke="#555" />
      <path d="M103 136L390 251" stroke="#3c3ca0" strokeWidth=".9" />
      <path d="M393 252.5l-9-.5 3-2.5-1-4z" fill="#00007a" stroke="#00007a" />
    </svg>
  );
}

function Legend() {
  return (
    <div className="absolute left-0 top-0 w-[77px] border border-[#444] bg-white px-[5px] pb-0.5 pt-[5px] font-['Liberation_Mono',monospace] text-[8px] leading-[8px] text-[#222]">
      <div>Safety Factor</div>
      <div className="mt-px flex gap-1.5">
        <div className="mb-1 mt-1 flex h-[237px] w-7 flex-col border border-b-0 border-[#222]">
          {scaleColors.map((color) => (
            <span key={color} className="flex-1 border-b border-[#222]" style={{ backgroundColor: color }} />
          ))}
        </div>
        <div className="flex flex-col justify-between">
          {scaleLabels.map((label) => (
            <span key={label}>{label}</span>
          ))}
        </div>
      </div>
    </div>
  );
}

function MaterialTable() {
  const cell = 'border border-[#222] p-0';
  return (
    <table className="absolute left-[419px] top-[293px] h-[110px] w-[329px] table-fixed border-collapse bg-white text-center font-['Lato','Noto_Sans',sans-serif] text-[7px] leading-[9px] text-black">
      <colgroup>
        <col className="w-[75px]" />
        <col className="w-6" />
        <col className="w-[52px]" />
        <col className="w-16" />
        <col className="w-[39px]" />
        <col className="w-6" />
        <col className="w-[33px]" />
        <col className="w-[18px]" />
      </colgroup>
      <thead>
        <tr className="h-[27px] bg-[#e0e0e0]">
          <th className={cell}>Material Name</th>
          <th className={cell}>Color</th>
          <th className={cell}>Unit Weight<br />(kN/m3)</th>
          <th className={cell}>Strength Type</th>
          <th className={cell}>Cohesion<br />(kPa)</th>
          <th className={cell}>Phi<br />(deg)</th>
          <th className={cell}>Water<br />Surface</th>
          <th className={cell}>Ru</th>
        </tr>
      </thead>
      <tbody>
        {materials.map((m) => (
          <tr key={m.name}>
            <td className={cell}>{m.name}</td>
            <td className={cell}><span className="mx-auto block size-[13px] border border-black" style={{ backgroundColor: m.color }} /></td>
            <td className={cell}>{m.weight}</td>
            <td className={cell}>{m.type}</td>
            <td className={cell}>{m.c}</td>
            <td className={cell}>{m.phi}</td>
            <td className={cell}>None</td>
            <td className={cell}>0</td>
          </tr>
        ))}
      </tbody>
    </table>
  );
}

function Splitter() {
  return (
    <div className="flex w-1.5 shrink-0 items-start bg-white pt-[219px]">
      <div className="flex h-[90px] w-full flex-col items-center justify-between border-y border-[#888] py-[3px]">
        {[0, 1, 2].map((n) => (
          <React.Fragment key={n}>
            {n > 0 && <span className="w-px flex-1 border-l border-dotted border-[#888]" />}
            <svg viewBox="0 0 3 4" className="h-1 w-[3px]"><path d="M3 0v4L0 2z" /></svg>
          </React.Fragment>
        ))}
      </div>
    </div>
  );
}

export default function App() {
  const [method, setMethod] = useState('Bishop simplified');
  const [command, setCommand] = useState('');

  return (
    <div className="flex h-screen flex-col overflow-hidden bg-[#f0f0f0] font-['Open_Sans','Noto_Sans',sans-serif] text-[8px] leading-none text-[#111]">
      <header className="shrink-0 bg-white">
        <div className="flex h-[15px] items-center">
          <svg viewBox="0 0 20 20" className="mr-[3px] size-3"><Contour x={7} y={0} s={12} /><path d="M0 8l4 1 8 6h8v4H0z" fill="#998" stroke="#444" /></svg>
          <h1>SlideInterpret - [EBA Planteamiento - Interpret View]</h1>
          <div className="ml-auto flex items-center gap-6 pr-3">
            <button aria-label="Minimize"><Minus size={9} /></button>
            <button aria-label="Restore"><Copy size={9} className="-scale-x-100" /></button>
            <button aria-label="Close"><X size={10} /></button>
          </div>
        </div>
        <nav className="flex h-[15px] items-center gap-2.5 pl-[3px]">
          <svg viewBox="0 0 20 20" className="-mr-[5px] size-3">{excavation}</svg>
          {menus.map((m) => (
            <button key={m}>{m}</button>
          ))}
          <div className="ml-auto flex gap-0.5 text-[#456]">
            <button aria-label="Minimize view" className="flex size-3 items-center justify-center border border-[#eee]"><Minus size={6} strokeWidth={3} /></button>
            <button aria-label="Restore view" className="flex size-3 items-center justify-center border border-[#eee]"><Copy size={7} strokeWidth={3} className="-scale-x-100" /></button>
            <button aria-label="Close view" className="flex size-3 items-center justify-center border border-[#eee]"><X size={8} strokeWidth={3} /></button>
          </div>
        </nav>
      </header>

      <div className="flex h-[26px] shrink-0 items-center border-t border-[#bbb]">
        <Bar items={bar1a} />
        <div className="relative mx-px h-6 w-[115px] shrink-0">
          <select
            aria-label="Analysis method"
            value={method}
            onChange={(e) => setMethod(e.target.value)}
            className="h-full w-full appearance-none border border-[#999] bg-white pl-[5px] font-medium"
          >
            <option>Bishop simplified</option>
            <option>Janbu simplified</option>
            <option>Spencer</option>
          </select>
          <ChevronDown size={8} className="pointer-events-none absolute right-0.5 top-2 text-[#444]" />
        </div>
        <Bar items={bar1b} />
      </div>
      <div className="flex h-[26px] shrink-0 items-center border-y border-[#b4b4b4]">
        <Bar items={bar2} />
      </div>

      <div className="flex min-h-0 flex-1">
        <SidePanel />
        <Splitter />
        <main className="flex min-w-0 flex-1 flex-col">
          <div className="flex min-h-0 flex-1 flex-col border-l border-t border-[#666] bg-white font-['Liberation_Sans',sans-serif] text-[8px]">
            <div className="flex min-h-0 flex-1">
              <VerticalRuler />
              <div className="relative min-w-0 flex-1 overflow-hidden">
                <Scene />
                <Legend />
                <span className="absolute left-[79px] top-[120px] border border-[#444] bg-white px-0.5 py-0.5">Pilote</span>
                <span className="absolute left-[314px] top-[102px] border border-[#222] bg-white px-0.5 py-[3px] font-['DejaVu_Sans',sans-serif] text-[9px] text-[#1c8a1c]">0.813</span>
                <MaterialTable />
              </div>
            </div>
            <HorizontalRuler />
          </div>
          <div className="flex h-5 shrink-0 items-start justify-end border-b border-[#b8b8b8] pr-6 pt-0.5">
            <input
              aria-label="Command"
              value={command}
              onChange={(e) => setCommand(e.target.value)}
              placeholder="|"
              className="h-[15px] w-24 border-2 border-[#1414f0] bg-white px-0.5 placeholder:text-black"
            />
          </div>
          <footer className="flex h-[15px] shrink-0 items-center border-b border-[#555] pl-px pr-[112px] font-bold">
            <span className="flex-1">For Help, press F1</span>
            <span className="mr-20 h-3 w-px bg-[#ddd]" />
            <span className="mr-2.5 h-3 w-px bg-[#ddd]" />
            <button className="border-r border-[#ddd] pr-2">MIN DATATIPS</button>
            <button className="border-r border-[#ddd] px-[3px]">SNAP</button>
            <button className="border-r border-[#ddd] px-[3px] text-[#8a8a8a]">GRID</button>
            <button className="border-r border-[#ddd] px-[3px]">ORTHO</button>
            <button className="border-r border-[#ddd] px-px text-[#8a8a8a]">OSNAP</button>
          </footer>
        </main>
      </div>
    </div>
  );
}
